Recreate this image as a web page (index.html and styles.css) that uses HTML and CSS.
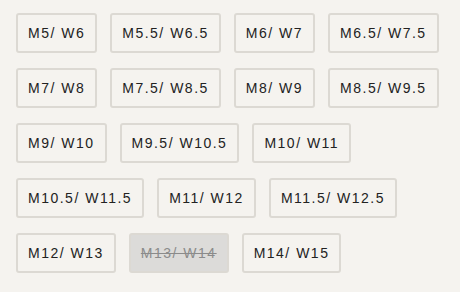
FILE: index.html
```html
<!DOCTYPE html>
<html lang="en">

<head>
    <meta charset="UTF-8">
    <meta name="viewport" content="width=device-width, initial-scale=1.0">
    <title>Select Size</title>
    <link rel="stylesheet" href="styles.css">
</head>

<body>
    <div class="size-list">
        <button class="size">M5/ W6</button>
        <button class="size">M5.5/ W6.5</button>
        <button class="size">M6/ W7</button>
        <button class="size">M6.5/ W7.5</button>
        <button class="size">M7/ W8</button>
        <button class="size">M7.5/ W8.5</button>
        <button class="size">M8/ W9</button>
        <button class="size">M8.5/ W9.5</button>
        <button class="size">M9/ W10</button>
        <button class="size">M9.5/ W10.5</button>
        <button class="size">M10/ W11</button>
        <button class="size">M10.5/ W11.5</button>
        <button class="size">M11/ W12</button>
        <button class="size">M11.5/ W12.5</button>
        <button class="size">M12/ W13</button>
        <button class="size sold-out" disabled>M13/ W14</button>
        <button class="size">M14/ W15</button>
    </div>
</body>

</html>
```

FILE: styles.css
```css
* {
    margin: 0;
    padding: 0;
    box-sizing: border-box;
}

body {
    background-color: #f5f3ef;
    font-family: "Liberation Sans", Arial, sans-serif;
    padding: 13px 16px;
}

.size-list {
    display: flex;
    flex-wrap: wrap;
    gap: 15px 13px;
    width: 428px;
}

.size {
    height: 40px;
    padding: 0 10px;
    font-family: inherit;
    font-size: 14px;
    letter-spacing: 1.5px;
    color: #222;
    background-color: #f5f3ef;
    border: 2px solid #dcd9d3;
    border-radius: 3px;
    cursor: pointer;
}

.size.sold-out {
    background-color: #dcdbd9;
    color: #8b8b8b;
    text-decoration: line-through;
    cursor: default;
}
```
